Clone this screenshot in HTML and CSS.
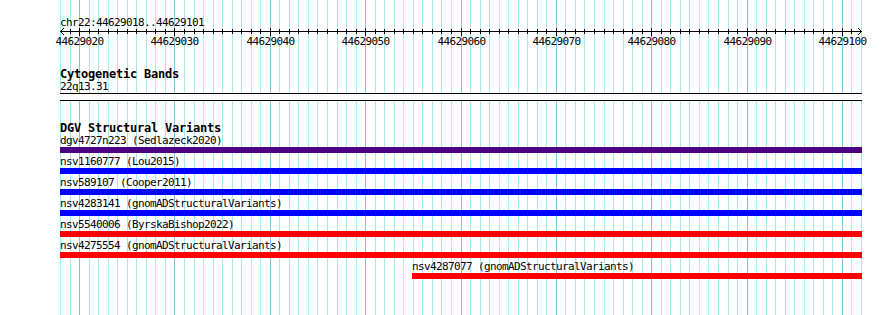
FILE: index.html
```html
<!DOCTYPE html>
<html lang="en">
<head>
    <meta charset="UTF-8">
    <title>chr22:44629018..44629101</title>
    <link rel="stylesheet" href="styles.css">
</head>
<body>
<div class="page" id="page">
    <!--网格线-->
    <svg class="grid" id="grid" width="890" height="315"></svg>
    <div class="content">
        <div class="chrom">chr22:44629018..44629101</div>
        <!--标尺-->
        <svg class="ruler" id="ruler" width="890" height="18"></svg>
        <div class="track">
            <div class="track-title">Cytogenetic Bands</div>
            <div class="feat-label">22q13.31</div>
            <div class="band"></div>
        </div>
        <div class="track">
            <div class="track-title">DGV Structural Variants</div>
            <div class="feat">
                <div class="feat-label">dgv4727n223 (Sedlazeck2020)</div>
                <div class="bar purple"></div>
            </div>
            <div class="feat">
                <div class="feat-label">nsv1160777 (Lou2015)</div>
                <div class="bar blue"></div>
            </div>
            <div class="feat">
                <div class="feat-label">nsv589107 (Cooper2011)</div>
                <div class="bar blue"></div>
            </div>
            <div class="feat">
                <div class="feat-label">nsv4283141 (gnomADStructuralVariants)</div>
                <div class="bar blue"></div>
            </div>
            <div class="feat">
                <div class="feat-label">nsv5540006 (ByrskaBishop2022)</div>
                <div class="bar red"></div>
            </div>
            <div class="feat">
                <div class="feat-label">nsv4275554 (gnomADStructuralVariants)</div>
                <div class="bar red"></div>
            </div>
            <div class="feat" style="margin-left: 352px">
                <div class="feat-label">nsv4287077 (gnomADStructuralVariants)</div>
                <div class="bar red"></div>
            </div>
        </div>
    </div>
</div>
<script src="script.js"></script>
</body>
</html>
```

FILE: styles.css
```css
* {
    margin: 0;
    padding: 0;
}

body {
    font-family: "DejaVu Sans Mono", "Liberation Mono", monospace;
    background: #fff;
    color: #000;
}

.page {
    position: relative;
    width: 890px;
    height: 315px;
    overflow: hidden;
}

.grid {
    position: absolute;
    left: 0;
    top: 0;
}

.grid line {
    stroke: #a6eaf0;
    stroke-width: 1;
}

.grid line.major {
    stroke: #80c6ea;
}

.content {
    position: relative;
    padding-top: 16px;
}

.chrom {
    padding-left: 60px;
    font-size: 11px;
    letter-spacing: -0.62px;
    line-height: 13px;
    height: 13px;
}

.ruler {
    display: block;
    overflow: visible;
}

.ruler line,
.ruler polyline {
    stroke: #000;
    stroke-width: 1;
    fill: none;
}

.ruler text {
    font-size: 11px;
    letter-spacing: -0.62px;
    fill: #000;
}

.track {
    margin-left: 60px;
    width: 802px;
    margin-top: 21px;
}

.track-title {
    font-size: 12px;
    font-weight: bold;
    letter-spacing: -0.22px;
    line-height: 13px;
    height: 13px;
    white-space: nowrap;
}

.feat-label {
    font-size: 11px;
    letter-spacing: -0.62px;
    line-height: 12px;
    height: 12px;
    white-space: nowrap;
}

.band {
    height: 6px;
    border-top: 1px solid #000;
    border-bottom: 1px solid #000;
    background: #fff;
}

.feat {
    margin-bottom: 3px;
}

.bar {
    height: 6px;
}

.purple {
    background: #4b0082;
}

.blue {
    background: #0000ff;
}

.red {
    background: #ff0000;
}
```

FILE: script.js
```js
var SVGNS = "http://www.w3.org/2000/svg";
//区段起止
var start = 44629018;
var end = 44629102;
var left = 60;
var right = 861;
var scale = (right - left) / (end - start);

function xOf(pos) {
    return Math.round(left + (pos - start) * scale) + 0.5;
}

function make(tag, attrs) {
    var el = document.createElementNS(SVGNS, tag);
    for (var k in attrs) {
        el.setAttribute(k, attrs[k]);
    }
    return el;
}

var grid = document.getElementById("grid");
var ruler = document.getElementById("ruler");

//主线
ruler.appendChild(make("line", {x1: 60, y1: 2.5, x2: 862, y2: 2.5}));
ruler.appendChild(make("polyline", {points: "64,-1 60.5,2.5 64,6"}));
ruler.appendChild(make("polyline", {points: "858,-1 861.5,2.5 858,6"}));

for (var pos = start; pos <= end; pos++) {
    var x = xOf(pos);
    var major = pos % 10 === 0;
    var g = make("line", {x1: x, y1: 0, x2: x, y2: 315});
    if (major) {
        g.setAttribute("class", "major");
    }
    grid.appendChild(g);
    if (pos === start || pos === end) {
        continue;
    }
    if (major) {
        ruler.appendChild(make("line", {x1: x, y1: -1, x2: x, y2: 7}));
        var t = make("text", {x: x, y: 16, "text-anchor": "middle"});
        t.textContent = pos;
        ruler.appendChild(t);
    } else {
        ruler.appendChild(make("line", {x1: x, y1: 0, x2: x, y2: 5}));
    }
}
```
